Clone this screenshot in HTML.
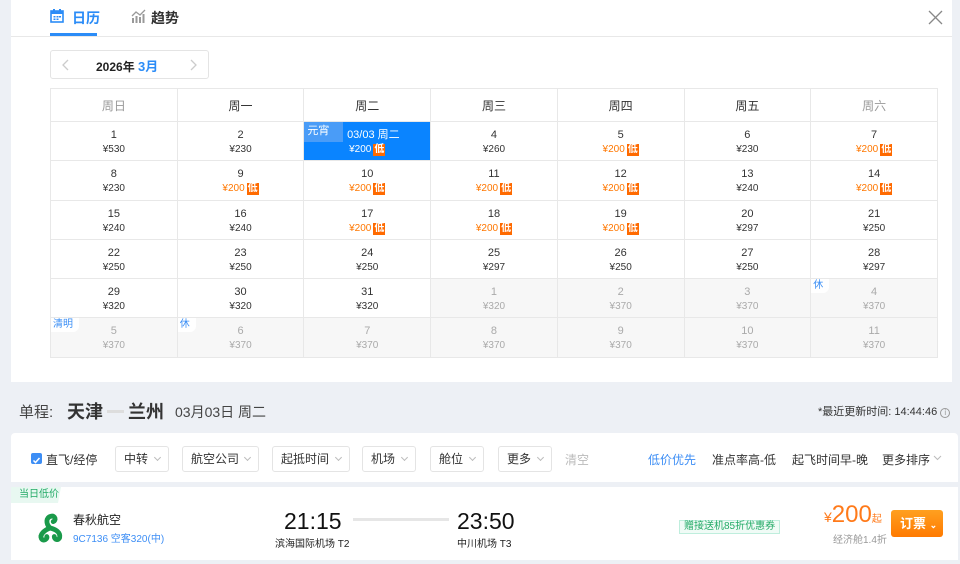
<!DOCTYPE html>
<html><head><meta charset="utf-8"><style>
*{margin:0;padding:0;box-sizing:border-box}
body{width:960px;height:564px;overflow:hidden;background:#edf0f5;font-family:"Liberation Sans","Noto Sans CJK SC",sans-serif;position:relative;color:#333}
.panel{position:absolute;left:11px;top:0;width:941px;height:382px;background:#fff}
.tabs{position:absolute;left:0;top:0;width:941px;height:37px;border-bottom:1px solid #e8e8e8}
.tab{position:absolute;top:8px;font-size:14px;font-weight:bold}
.ul{position:absolute;left:39px;top:33px;width:47px;height:3px;background:#2b8cf7}
.mbox{position:absolute;left:39px;top:50px;width:159px;height:29px;border:1px solid #e4e4e4;border-radius:3px}
table{position:absolute;left:39px;top:88px;border-collapse:collapse;table-layout:fixed;width:888px}
td{border:1px solid #e8e8e8;text-align:center;height:39.3px;position:relative;font-size:11px;color:#333;line-height:15px;padding-top:6px;vertical-align:top}
th{border:1px solid #e8e8e8;height:33px;font-weight:normal;font-size:12px;color:#333}
td .p{font-size:10px;display:block;line-height:14px}
td.g{background:#f7f7f7;color:#aaa}
.o{color:#ff7700}
.low{display:inline-block;background:#ff6a00;color:#fff;font-size:10px;line-height:12px;padding:0 1px;margin-left:2px;font-weight:bold}
.tag{position:absolute;left:0;top:0;background:#fff;color:#3a8ef5;font-size:10px;line-height:14px;padding:0 6px 0 2px;border-bottom-right-radius:6px}
.sel{background:#0a84ff;color:#fff}
.bar{position:absolute;left:11px;top:433px;width:947px;height:49px;background:#fff;border-radius:4px 4px 0 0}
.dd{position:absolute;top:13px;height:26px;border:1px solid #e4e4e4;border-radius:3px;font-size:12px;line-height:24px;padding-left:8px;color:#333}
.dd:after{content:"";position:absolute;right:8px;top:8px;width:4px;height:4px;border-right:1px solid #bbb;border-bottom:1px solid #bbb;transform:rotate(45deg)}
.s{position:absolute;top:18px;font-size:12px;color:#333}
.card{position:absolute;left:11px;top:487px;width:947px;height:73px;background:#fff}
</style></head><body>
<div class="panel">
 <div class="tabs">
  <svg style="position:absolute;left:39px;top:9px" width="14" height="14" viewBox="0 0 14 14"><rect x="1" y="2" width="12" height="11" fill="none" stroke="#2b8cf7" stroke-width="1.6"/><rect x="1" y="2" width="12" height="3" fill="#2b8cf7"/><rect x="3" y="0" width="2" height="3" fill="#2b8cf7"/><rect x="9" y="0" width="2" height="3" fill="#2b8cf7"/><g fill="#2b8cf7"><rect x="3.5" y="7" width="2" height="1.5"/><rect x="6.5" y="7" width="2" height="1.5"/><rect x="9" y="7" width="2" height="1.5"/><rect x="3.5" y="9.5" width="2" height="1.5"/><rect x="6.5" y="9.5" width="2" height="1.5"/></g></svg>
  <div class="tab" style="left:61px;color:#2b8cf7">日历</div>
  <svg style="position:absolute;left:120px;top:9px" width="15" height="14" viewBox="0 0 15 14"><g fill="#999"><rect x="1" y="9" width="2" height="5"/><rect x="4.5" y="7" width="2" height="7"/><rect x="8" y="8" width="2" height="6"/><rect x="11.5" y="5" width="2" height="9"/></g><path d="M1 7 L5 3 L9 6 L14 1" stroke="#999" stroke-width="1.3" fill="none"/></svg>
  <div class="tab" style="left:140px">趋势</div>
  <div class="ul"></div>
  <svg style="position:absolute;left:917px;top:10px" width="15" height="15" viewBox="0 0 15 15"><path d="M1 1L14 14M14 1L1 14" stroke="#888" stroke-width="1.3"/></svg>
 </div>
 <div class="mbox">
  <svg style="position:absolute;left:11px;top:8px" width="7" height="12"><path d="M6 1L1 6L6 11" stroke="#ccc" fill="none" stroke-width="1.3"/></svg>
  <div style="position:absolute;left:45px;top:5px;font-size:12px;font-weight:bold;color:#222">2026年 <span style="color:#2b8cf7;font-size:13px">3月</span></div>
  <svg style="position:absolute;left:139px;top:8px" width="7" height="12"><path d="M1 1L6 6L1 11" stroke="#ccc" fill="none" stroke-width="1.3"/></svg>
 </div>
 <table>
  <tr><th style="color:#999">周日</th><th>周一</th><th>周二</th><th>周三</th><th>周四</th><th>周五</th><th style="color:#999">周六</th></tr>
  <tr><td>1<span class="p">¥530</span></td><td>2<span class="p">¥230</span></td><td class="sel"><span class="tag" style="background:#4a9cf7;color:#fff;border-radius:0;padding:1px 14px 3px 3px;line-height:16px;font-size:11px">元宵</span>&nbsp;&nbsp;&nbsp;&nbsp;03/03 周二<span class="p">¥200<span class="low">低</span></span></td><td>4<span class="p">¥260</span></td><td>5<span class="p o">¥200<span class="low">低</span></span></td><td>6<span class="p">¥230</span></td><td>7<span class="p o">¥200<span class="low">低</span></span></td></tr>
  <tr><td>8<span class="p">¥230</span></td><td>9<span class="p o">¥200<span class="low">低</span></span></td><td>10<span class="p o">¥200<span class="low">低</span></span></td><td>11<span class="p o">¥200<span class="low">低</span></span></td><td>12<span class="p o">¥200<span class="low">低</span></span></td><td>13<span class="p">¥240</span></td><td>14<span class="p o">¥200<span class="low">低</span></span></td></tr>
  <tr><td>15<span class="p">¥240</span></td><td>16<span class="p">¥240</span></td><td>17<span class="p o">¥200<span class="low">低</span></span></td><td>18<span class="p o">¥200<span class="low">低</span></span></td><td>19<span class="p o">¥200<span class="low">低</span></span></td><td>20<span class="p">¥297</span></td><td>21<span class="p">¥250</span></td></tr>
  <tr><td>22<span class="p">¥250</span></td><td>23<span class="p">¥250</span></td><td>24<span class="p">¥250</span></td><td>25<span class="p">¥297</span></td><td>26<span class="p">¥250</span></td><td>27<span class="p">¥250</span></td><td>28<span class="p">¥297</span></td></tr>
  <tr><td>29<span class="p">¥320</span></td><td>30<span class="p">¥320</span></td><td>31<span class="p">¥320</span></td><td class="g">1<span class="p">¥320</span></td><td class="g">2<span class="p">¥370</span></td><td class="g">3<span class="p">¥370</span></td><td class="g"><span class="tag">休</span>4<span class="p">¥370</span></td></tr>
  <tr><td class="g"><span class="tag">清明</span>5<span class="p">¥370</span></td><td class="g"><span class="tag">休</span>6<span class="p">¥370</span></td><td class="g">7<span class="p">¥370</span></td><td class="g">8<span class="p">¥370</span></td><td class="g">9<span class="p">¥370</span></td><td class="g">10<span class="p">¥370</span></td><td class="g">11<span class="p">¥370</span></td></tr>
 </table>
</div>
<div style="position:absolute;left:19px;top:401px;font-size:15px;color:#444">单程:</div>
<div style="position:absolute;left:67px;top:398px;font-size:18px;font-weight:bold;color:#333">天津</div>
<div style="position:absolute;left:107px;top:410px;width:17px;height:3px;background:#ddd"></div>
<div style="position:absolute;left:128px;top:398px;font-size:18px;font-weight:bold;color:#333">兰州</div>
<div style="position:absolute;left:175px;top:402px;font-size:14px;color:#444">03月03日 周二</div>
<div style="position:absolute;left:818px;top:403px;font-size:11px;color:#333">*最近更新时间: 14:44:46 <span style="display:inline-block;width:10px;height:10px;border:1px solid #999;border-radius:50%;font-size:8px;line-height:8px;text-align:center;color:#999">i</span></div>
<div class="bar">
 <div style="position:absolute;left:20px;top:20px;width:11px;height:11px;background:#3d8ef5;border-radius:2px"><svg width="11" height="11"><path d="M2.5 5.5L4.5 7.5L8.5 3" stroke="#fff" fill="none" stroke-width="1.5"/></svg></div>
 <div class="s" style="left:35px">直飞/经停</div>
 <div class="dd" style="left:104px;width:54px">中转</div>
 <div class="dd" style="left:171px;width:77px">航空公司</div>
 <div class="dd" style="left:261px;width:78px">起抵时间</div>
 <div class="dd" style="left:351px;width:54px">机场</div>
 <div class="dd" style="left:419px;width:54px">舱位</div>
 <div class="dd" style="left:487px;width:54px">更多</div>
 <div class="s" style="left:554px;color:#bbb">清空</div>
 <div class="s" style="left:637px;color:#3d8ef5">低价优先</div>
 <div class="s" style="left:701px">准点率高-低</div>
 <div class="s" style="left:781px">起飞时间早-晚</div>
 <div class="s" style="left:871px">更多排序</div>
 <svg style="position:absolute;left:922px;top:22px" width="9" height="6"><path d="M1 1L4.5 4.5L8 1" stroke="#bbb" fill="none"/></svg>
</div>
<div class="card">
 <div style="position:absolute;left:0;top:0;height:16px;width:50px;background:#e8f8f1;color:#22aa66;font-size:10px;line-height:16px;padding-left:8px;clip-path:polygon(0 0,100% 0,94% 100%,0 100%)">当日低价</div>
 <svg style="position:absolute;left:24px;top:26px" width="30" height="30" viewBox="0 0 28 28"><g fill="none" stroke="#1a9a4a" stroke-width="4.5" stroke-linecap="round"><path d="M14 14C10 10 10 4 15 3C19 2 20 7 17 8"/><path d="M14 14C9 16 4 20 6 24C8 27 12 24 11 22"/><path d="M14 14C19 15 24 18 23 23C22 26 18 25 18 22"/></g></svg>
 <div style="position:absolute;left:62px;top:24px;font-size:12px;color:#222">春秋航空</div>
 <div style="position:absolute;left:62px;top:43px;font-size:10px;color:#3d8ef5">9C7136 空客320(中)</div>
 <div style="position:absolute;left:273px;top:21px;font-size:23px;color:#111">21:15</div>
 <div style="position:absolute;left:264px;top:48px;font-size:10px;color:#222">滨海国际机场 T2</div>
 <div style="position:absolute;left:342px;top:31px;width:96px;height:3px;background:#e6e6e6"></div>
 <div style="position:absolute;left:446px;top:21px;font-size:23px;color:#111">23:50</div>
 <div style="position:absolute;left:446px;top:48px;font-size:10px;color:#222">中川机场 T3</div>
 <div style="position:absolute;left:668px;top:33px;border:1px solid #bfeedd;background:#f0fbf6;color:#22aa66;font-size:10px;line-height:12px;padding:0 4px">赠接送机85折优惠券</div>
 <div style="position:absolute;left:813px;top:14px;color:#ff7a1a;font-size:14px">¥<span style="font-size:24px">200</span><span style="font-size:10px">起</span></div>
 <div style="position:absolute;left:822px;top:44px;color:#999;font-size:10px">经济舱1.4折</div>
 <div style="position:absolute;left:880px;top:23px;width:52px;height:27px;background:linear-gradient(#ffa020,#ff7a00);border-radius:3px;color:#fff;font-size:13px;font-weight:bold;line-height:27px;padding-left:9px">订票 <span style="font-size:9px">⌄</span></div>
</div>
</body></html>
